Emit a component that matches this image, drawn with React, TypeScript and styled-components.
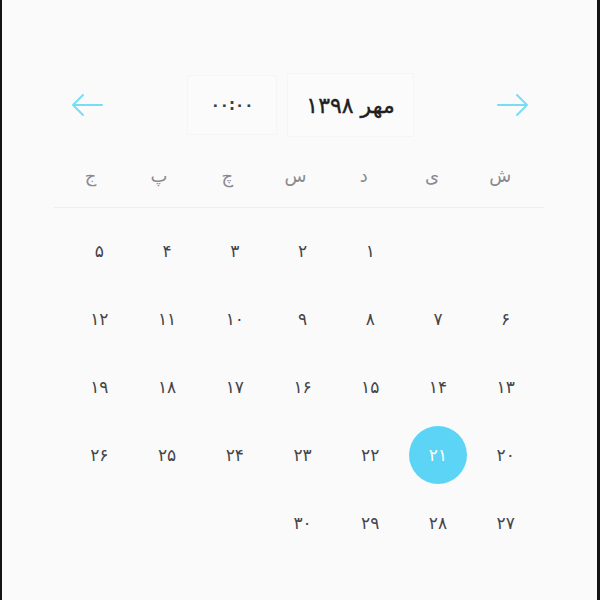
import React from "react";
import styled, { createGlobalStyle } from "styled-components";

const Global = createGlobalStyle`
  html, body { margin: 0; padding: 0; background: #111; }
  #root { width: 600px; height: 600px; }
`;

const Page = styled.div`
  box-sizing: border-box;
  width: 600px;
  height: 600px;
  background: #fafafb;
  border-left: 2px solid #141414;
  border-right: 3px solid #141414;
  display: flex;
  justify-content: center;
  font-family: "DejaVu Sans", "Noto Sans", sans-serif;
`;

const Calendar = styled.div`
  width: 490px;
  margin-left: -2px;
  padding-top: 73px;
  display: flex;
  flex-direction: column;
`;

const Header = styled.div`
  height: 64px;
  display: flex;
  align-items: center;
  justify-content: space-between;
  padding: 0 15px 0 17px;
`;

const ArrowButton = styled.button`
  border: none;
  background: transparent;
  padding: 0;
  width: 32px;
  height: 24px;
  display: flex;
  align-items: center;
  justify-content: center;
  cursor: pointer;
`;

const Center = styled.div`
  display: flex;
  align-items: center;
  gap: 10px;
  margin-left: 2px;
`;

const Box = styled.div<{ $w: number; $h: number }>`
  box-sizing: border-box;
  width: ${(p) => p.$w}px;
  height: ${(p) => p.$h}px;
  display: flex;
  align-items: center;
  justify-content: center;
  background: #fbfbfc;
  border: 1px solid #f5f5f7;
  border-radius: 2px;
`;

const TimeText = styled.span`
  font-size: 15px;
  color: #3e3e42;
  letter-spacing: 2px;
  font-weight: bold;
`;

const MonthText = styled.span`
  font-size: 22px;
  color: #1f1f22;
  -webkit-text-stroke: 0.4px #1f1f22;
`;

const WeekRow = styled.div`
  display: grid;
  grid-template-columns: repeat(7, 1fr);
  padding: 0 9px 0 3px;
  height: 70px;
  align-items: center;
  border-bottom: 1px solid #eeeef1;
`;

const WeekDay = styled.div`
  text-align: center;
  font-size: 18px;
  color: #8a8a8e;
  padding-top: 6px;
`;

const DayGrid = styled.div`
  display: grid;
  grid-template-columns: repeat(7, 1fr);
  grid-auto-rows: 68px;
  padding: 9px 4px 0 12px;
`;

const Day = styled.div`
  display: flex;
  align-items: center;
  justify-content: center;
`;

const DayNum = styled.span<{ $selected?: boolean }>`
  width: 58px;
  height: 58px;
  border-radius: 50%;
  display: flex;
  align-items: center;
  justify-content: center;
  font-size: 17px;
  color: ${(p) => (p.$selected ? "#ffffff" : "#454549")};
  background: ${(p) => (p.$selected ? "#5bd4f5" : "transparent")};
`;

const fa = (n: number) =>
  String(n).replace(/\d/g, (d) => "۰۱۲۳۴۵۶۷۸۹"[Number(d)]);

const Arrow = ({ dir }: { dir: "left" | "right" }) => (
  <svg width="32" height="24" viewBox="0 0 32 24" fill="none">
    {dir === "left" ? (
      <path d="M2 12 H31 M12 2 L2 12 L12 22" stroke="#79dcf5" strokeWidth="2" strokeLinecap="round" strokeLinejoin="round" />
    ) : (
      <path d="M30 12 H1 M20 2 L30 12 L20 22" stroke="#79dcf5" strokeWidth="2" strokeLinecap="round" strokeLinejoin="round" />
    )}
  </svg>
);

const weekDays = ["ش", "ی", "د", "س", "چ", "پ", "ج"];

export default function App() {
  const cells: (number | null)[] = [null, null];
  for (let i = 1; i <= 30; i++) cells.push(i);
  return (
    <>
      <Global />
      <Page>
        <Calendar dir="rtl">
          <Header>
            <ArrowButton aria-label="ماه قبل">
              <Arrow dir="right" />
            </ArrowButton>
            <Center>
              <Box $w={127} $h={64}>
                <MonthText>مهر {fa(1398)}</MonthText>
              </Box>
              <Box $w={90} $h={60}>
                <TimeText dir="ltr">۰۰:۰۰</TimeText>
              </Box>
            </Center>
            <ArrowButton aria-label="ماه بعد">
              <Arrow dir="left" />
            </ArrowButton>
          </Header>
          <WeekRow>
            {weekDays.map((w) => (
              <WeekDay key={w}>{w}</WeekDay>
            ))}
          </WeekRow>
          <DayGrid>
            {cells.map((c, i) => (
              <Day key={i}>
                {c !== null && <DayNum $selected={c === 21}>{fa(c)}</DayNum>}
              </Day>
            ))}
          </DayGrid>
        </Calendar>
      </Page>
    </>
  );
}
